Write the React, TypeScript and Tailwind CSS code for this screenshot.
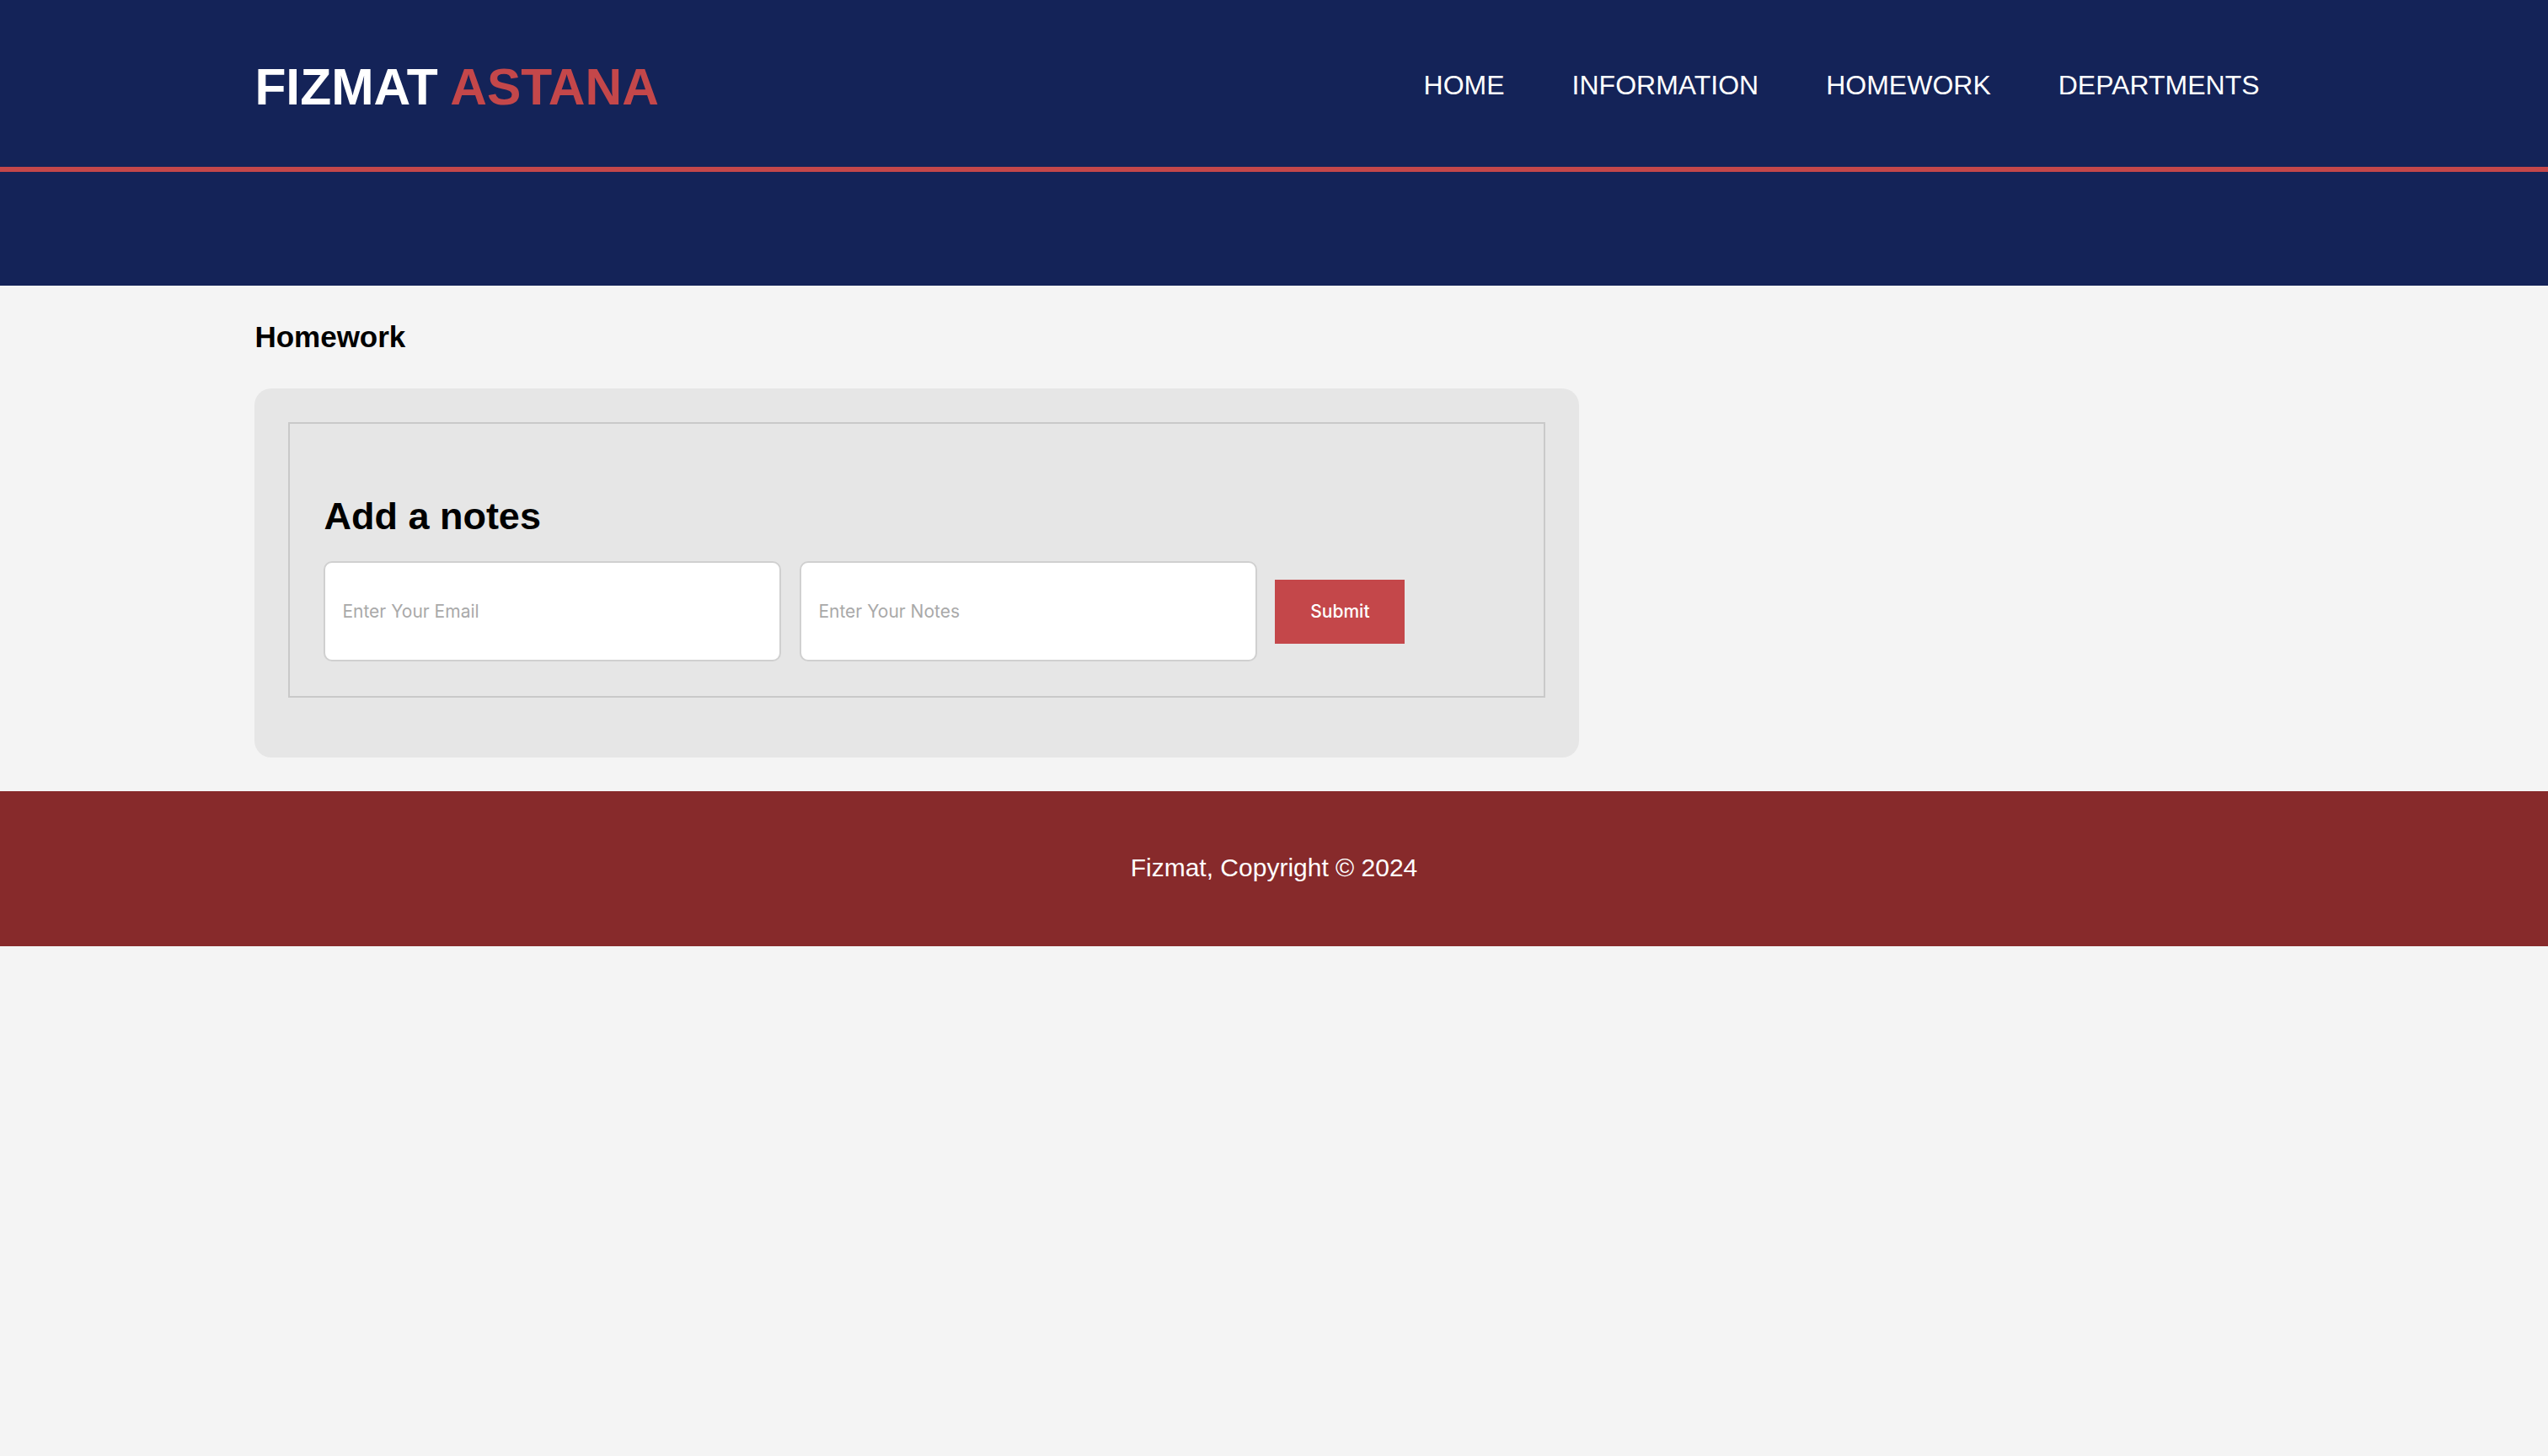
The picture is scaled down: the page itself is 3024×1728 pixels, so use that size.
import { useState } from "react";

const navLinks = ["HOME", "INFORMATION", "HOMEWORK", "DEPARTMENTS"];

function Header() {
  return (
    <div className="bg-[#142358]">
      <header className="h-[204px] border-b-[6px] border-[#c4474a]">
        <div className="w-[80%] h-full mx-auto flex items-center justify-between">
          <div className="mt-[8px] text-[60.5px] font-bold leading-[69px] font-['Liberation_Sans',Arial,sans-serif]">
            <span className="text-white">FIZMAT </span>
            <span className="text-[#c4474a]">ASTANA</span>
          </div>
          <nav className="mt-[4px] flex items-center">
            {navLinks.map((link) => (
              <a
                key={link}
                href="#"
                className="px-[40px] text-[32px] text-white font-['Liberation_Sans',Arial,sans-serif]"
              >
                {link}
              </a>
            ))}
          </nav>
        </div>
      </header>
      <div className="h-[135px]" />
    </div>
  );
}

function NotesForm() {
  const [email, setEmail] = useState("");
  const [notes, setNotes] = useState("");

  return (
    <div className="w-[1572px] bg-[#e6e6e6] rounded-[20px] px-[40px] pt-[40px] pb-[71px]">
      <div className="border-2 border-[#c9c9c9] px-[40px] pt-[84px] pb-[41px]">
        <h2 className="text-[45px] font-bold leading-[52px] text-black mb-[27px] font-['Liberation_Sans',Arial,sans-serif]">
          Add a notes
        </h2>
        <form className="flex items-center gap-[21px]" onSubmit={(e) => e.preventDefault()}>
          <input
            type="email"
            value={email}
            onChange={(e) => setEmail(e.target.value)}
            placeholder="Enter Your Email"
            className="w-[543px] h-[119px] bg-white border-2 border-[#d0d0d0] rounded-[10px] px-[20px] text-[21px] text-black placeholder:text-[#a9a9a9] outline-none font-['Inter',sans-serif]"
          />
          <input
            type="text"
            value={notes}
            onChange={(e) => setNotes(e.target.value)}
            placeholder="Enter Your Notes"
            className="ml-px w-[543px] h-[119px] bg-white border-2 border-[#d0d0d0] rounded-[10px] px-[20px] text-[21px] text-black placeholder:text-[#a9a9a9] outline-none font-['Inter',sans-serif]"
          />
          <button
            type="submit"
            className="w-[154px] h-[76px] bg-[#c4474a] text-white text-[21px] font-medium font-['Inter',sans-serif]"
          >
            Submit
          </button>
        </form>
      </div>
    </div>
  );
}

export default function App() {
  return (
    <div className="min-h-screen bg-[#f4f4f4]">
      <Header />
      <main className="w-[80%] mx-auto pt-[40px] pb-[40px]">
        <h1 className="text-[35px] font-bold leading-[42px] text-black mb-[40px] font-['Liberation_Sans',Arial,sans-serif]">
          Homework
        </h1>
        <NotesForm />
      </main>
      <footer className="h-[184px] bg-[#872a2b] flex items-center justify-center">
        <p className="mb-[4px] text-[30px] text-white font-['Liberation_Sans',Arial,sans-serif]">
          Fizmat, Copyright © 2024
        </p>
      </footer>
    </div>
  );
}
